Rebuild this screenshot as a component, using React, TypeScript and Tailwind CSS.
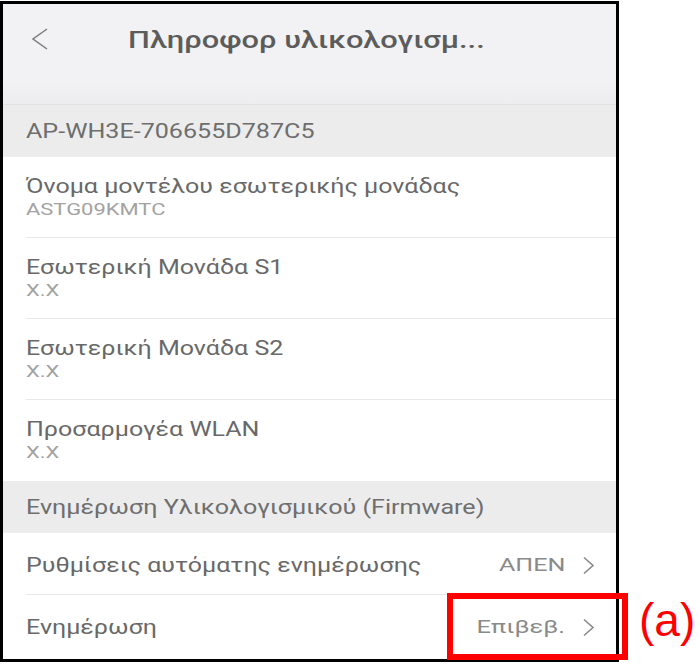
import { ReactNode } from 'react';

const infoRows = [
  { title: 'Όνομα μοντέλου εσωτερικής μονάδας', value: 'ASTG09KMTC' },
  { title: 'Εσωτερική Μονάδα S1', value: 'X.X' },
  { title: 'Εσωτερική Μονάδα S2', value: 'X.X' },
  { title: 'Προσαρμογέα WLAN', value: 'X.X' },
];

// the screenshot is stretched sideways, so text glyphs are widened
const Wide = ({ children, className }: { children: ReactNode; className: string }) => (
  <span className={`inline-block whitespace-nowrap ${className}`}>{children}</span>
);

const Chevron = () => (
  <svg width="13" height="19" viewBox="0 0 13 19" className="shrink-0">
    <polyline points="2,1.5 11,9.5 2,17.5" fill="none" stroke="#8a8a8a" strokeWidth="1.6" />
  </svg>
);

const SectionHeader = ({ label }: { label: string }) => (
  <div className="flex h-[52px] items-center bg-[#ececec] pl-[23px]">
    <Wide className="origin-left scale-x-[1.255] text-[20px] text-[#6e6e6e]">{label}</Wide>
  </div>
);

export default function App() {
  return (
    <div
      className="flex h-[667px] w-[700px] items-start bg-white"
      style={{ fontFamily: 'Roboto, "Noto Sans", sans-serif' }}
    >
      <div className="mt-px h-[661px] w-[619px] border-[3px] border-black">
        <div className="flex h-full flex-col overflow-hidden bg-white">
          <header className="relative flex h-[100px] items-start bg-[#f2f2f4] pt-[17px]">
            <div className="flex h-10 w-[125px] items-start pl-[28px] pt-[6px]">
              <svg width="18" height="24" viewBox="0 0 18 24">
                <polyline points="16,2 2,12 16,22" fill="none" stroke="#7a7a7a" strokeWidth="1.5" />
              </svg>
            </div>
            <h1 className="flex h-10 items-center">
              <Wide className="origin-left scale-x-[1.34] text-[23px] font-medium text-[#5c5c5c]">
                Πληροφορ υλικολογισμ...
              </Wide>
            </h1>
            <div className="absolute inset-x-0 bottom-0 h-6 bg-gradient-to-b from-[#f2f2f4] to-[#ededef]" />
          </header>
          <div className="h-px bg-[#e2e2e2]" />

          <SectionHeader label="AP-WH3E-706655D787C5" />

          {infoRows.map((row, index) => (
            <div key={row.title} className="pl-[23px]">
              <div
                className={`flex h-[81px] flex-col justify-center pb-[2px] ${
                  index < infoRows.length - 1 ? 'border-b border-[#e8e8e8]' : ''
                }`}
              >
                <Wide className="origin-left scale-x-[1.22] text-[20.5px] leading-[26px] text-[#686868]">
                  {row.title}
                </Wide>
                <Wide className="origin-left scale-x-[1.33] text-[16.5px] leading-[21px] text-[#a2a2a2]">
                  {row.value}
                </Wide>
              </div>
            </div>
          ))}

          <SectionHeader label="Ενημέρωση Υλικολογισμικού (Firmware)" />

          <div className="pl-[23px]">
            <div className="flex h-[62px] items-center justify-between border-b border-[#e8e8e8] pt-[4px] pr-[21px]">
              <Wide className="origin-left scale-x-[1.22] text-[20.5px] text-[#686868]">
                Ρυθμίσεις αυτόματης ενημέρωσης
              </Wide>
              <span className="flex items-center gap-[17px]">
                <Wide className="origin-right scale-x-[1.32] text-[19px] text-[#8a8a8a]">ΑΠΕΝ</Wide>
                <Chevron />
              </span>
            </div>
            <div className="flex h-[61px] items-center justify-between pt-[3px] pr-[21px]">
              <Wide className="origin-left scale-x-[1.22] text-[20.5px] text-[#686868]">Ενημέρωση</Wide>
              <span className="flex items-center gap-[17px]">
                <Wide className="origin-right scale-x-[1.34] text-[19px] text-[#8a8a8a]">Επιβεβ.</Wide>
                <Chevron />
              </span>
            </div>
          </div>
        </div>
      </div>

      <div className="relative h-full flex-1">
        <div className="absolute left-[-172px] top-[593px] h-[67px] w-[181px] border-[6px] border-[#ff0000]" />
        <span
          className="absolute left-[20px] top-[588px] text-[46px] leading-[64px] text-[#ff0000]"
          style={{ fontFamily: '"Liberation Sans", Arial, sans-serif' }}
        >
          (a)
        </span>
      </div>
    </div>
  );
}
